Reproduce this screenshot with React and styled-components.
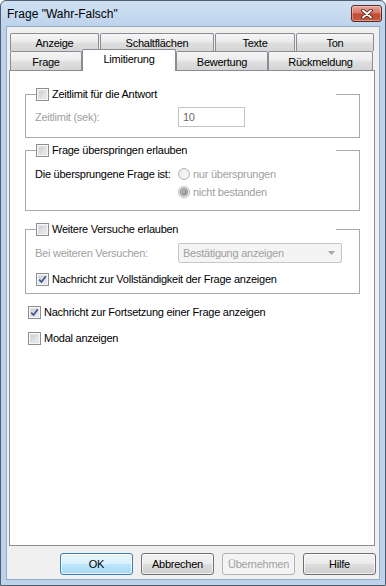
import React from "react";
import styled, { createGlobalStyle } from "styled-components";

const GlobalStyle = createGlobalStyle`
    html, body {
        margin: 0;
        padding: 0;
        background: #ffffff;
    }
    body {
        font-family: "Liberation Sans", Arial, sans-serif;
        font-size: 11px;
        letter-spacing: -0.25px;
        color: #000;
    }
`
const Window = styled.div`
    width: 386px;
    height: 586px;
    box-sizing: border-box;
    border: 1px solid #4f5e70;
    border-radius: 6px 6px 0 0;
    background: linear-gradient(#cfe0f3, #bdd3ec 26px, #bdd3ec);
    display: flex;
    flex-direction: column;
`
const TitleBar = styled.div`
    height: 25px;
    flex-shrink: 0;
    display: flex;
    align-items: center;
    justify-content: space-between;
    padding: 0 3px 0 6px;
`
const Title = styled.div`
    font-size: 12px;
    letter-spacing: 0;
    color: #000;
`
const CloseButton = styled.div`
    width: 31px;
    height: 17px;
    box-sizing: border-box;
    border: 1px solid #5f2a22;
    border-radius: 3px;
    background: linear-gradient(#e8a99c, #d47866 45%, #c24a33 55%, #c95a41);
    box-shadow: inset 0 0 0 1px rgba(255, 255, 255, .35);
    display: flex;
    align-items: center;
    justify-content: center;
`
const Client = styled.div`
    flex: 1;
    margin: 0 5px 5px;
    border: 1px solid #97abc4;
    background: #f0f0f0;
    display: flex;
    flex-direction: column;
    padding: 6px 0 4px;
    min-height: 0;
`
const TabRow = styled.div`
    display: flex;
    align-items: flex-end;
    gap: ${p => p.$gap}px;
    height: ${p => p.$h}px;
    padding-left: 3px;
`
const Tab = styled.div`
    width: ${p => p.$w}px;
    height: ${p => (p.$active ? 22 : p.$h)}px;
    box-sizing: border-box;
    border: 1px solid #898c95;
    border-bottom: none;
    border-radius: 2px 2px 0 0;
    background: ${p => (p.$active ? "#ffffff" : "linear-gradient(#f6f6f6, #ebebeb 45%, #dedede 55%, #d5d5d5)")};
    margin-bottom: ${p => (p.$active ? -1 : 0)}px;
    z-index: ${p => (p.$active ? 2 : 0)};
    display: flex;
    align-items: center;
    justify-content: center;
    padding-top: ${p => (p.$active ? 0 : 1)}px;
    padding-bottom: ${p => (p.$active ? 3 : 0)}px;
`
const Panel = styled.div`
    flex: 1;
    margin: 0 4px 0 2px;
    background: #ffffff;
    border: 1px solid #898c95;
    padding: 16px 14px 0 15px;
    display: flex;
    flex-direction: column;
`
const GroupBox = styled.fieldset`
    margin: ${p => p.$mt}px 0 0;
    padding: ${p => p.$pt}px 9px ${p => p.$pb}px;
    border: 1px solid #a9a9a9;
    min-width: 0;
`
const Legend = styled.legend`
    display: flex;
    align-items: center;
    gap: 3px;
    width: 300px;
    height: 14px;
    padding: 0;
    margin-left: 1px;
    box-sizing: border-box;
`
const FieldGrid = styled.div`
    display: grid;
    grid-template-columns: 143px auto;
    align-items: ${p => p.$align || "center"};
`
const FieldLabel = styled.div`
    color: ${p => (p.$disabled ? "#a0a0a0" : "#000")};
    line-height: 18px;
`
const TextBox = styled.div`
    width: 67px;
    height: 20px;
    box-sizing: border-box;
    border: 1px solid #c3c3c3;
    background: #ffffff;
    color: #6d6d6d;
    padding-left: 4px;
    display: flex;
    align-items: center;
`
const RadioList = styled.div`
    display: flex;
    flex-direction: column;
`
const RadioRow = styled.div`
    height: 18px;
    display: flex;
    align-items: center;
    gap: 3px;
    color: #a0a0a0;
`
const Radio = styled.span`
    width: 12px;
    height: 12px;
    box-sizing: border-box;
    border-radius: 50%;
    border: 1px solid #b8b8b8;
    background: radial-gradient(circle at 60% 60%, #fafafa, #e6e6e6);
    display: flex;
    align-items: center;
    justify-content: center;
    &::after {
        content: "";
        display: ${p => (p.$checked ? "block" : "none")};
        width: 6px;
        height: 6px;
        border-radius: 50%;
        background: radial-gradient(circle at 40% 40%, #b5b5b5, #7f7f7f);
        box-shadow: 0 0 0 1px #9a9a9a;
    }
`
const Select = styled.div`
    width: 164px;
    height: 20px;
    box-sizing: border-box;
    border: 1px solid #c6c6c6;
    border-radius: 2px;
    background: #f4f4f4;
    color: #a0a0a0;
    padding: 0 6px 0 4px;
    display: flex;
    align-items: center;
    justify-content: space-between;
`
const CheckRow = styled.div`
    height: 14px;
    display: flex;
    align-items: center;
    gap: 3px;
    margin: ${p => p.$mt || 0}px 0 0 ${p => p.$ml || 0}px;
`
const Box = styled.span`
    width: 13px;
    height: 13px;
    flex-shrink: 0;
    box-sizing: border-box;
    border: 1px solid #8e8f8f;
    background: linear-gradient(135deg, #c4c8ce, #f4f4f4);
    box-shadow: inset 0 0 0 1px #f7f7f7, inset 0 0 0 2px #e2e3e5;
    display: flex;
    align-items: center;
    justify-content: center;
`
const ButtonRow = styled.div`
    display: flex;
    justify-content: flex-end;
    gap: 8px;
    margin-top: 7px;
    padding-right: 3px;
`
const Button = styled.div`
    width: 73px;
    height: 22px;
    box-sizing: border-box;
    border-radius: 3px;
    display: flex;
    align-items: center;
    justify-content: center;
    border: 1px solid ${p => (p.$variant === "default" ? "#3c7fb1" : p.$variant === "disabled" ? "#b5b2b5" : "#707070")};
    color: ${p => (p.$variant === "disabled" ? "#a0a0a0" : "#000")};
    background: ${p =>
        p.$variant === "default"
            ? "linear-gradient(#eaf6fd, #d9f0fc 50%, #bee6fd 50%, #a7d9f5)"
            : p.$variant === "disabled"
            ? "#f4f4f4"
            : "linear-gradient(#f2f2f2, #ebebeb 50%, #dddddd 50%, #cfcfcf)"};
    box-shadow: inset 0 0 0 1px ${p => (p.$variant === "disabled" ? "#f4f4f4" : "rgba(255, 255, 255, .7)")};
`

function Checkbox({ checked }) {
    return (
        <Box>
            {checked && (
                <svg width="9" height="9" viewBox="0 0 9 9">
                    <path d="M1.2 4.6 L3.5 7 L7.8 1.3" fill="none" stroke="#3f5394" strokeWidth="1.7" />
                </svg>
            )}
        </Box>
    )
}

export default function App() {
    return (
        <>
            <GlobalStyle />
            <Window>
                <TitleBar>
                    <Title>{'Frage "Wahr-Falsch"'}</Title>
                    <CloseButton>
                        <svg width="12" height="10" viewBox="0 0 12 10">
                            <path d="M2 1.5 L10 8.5 M10 1.5 L2 8.5" stroke="#4a1a12" strokeWidth="3.6" strokeLinecap="round" />
                            <path d="M2 1.5 L10 8.5 M10 1.5 L2 8.5" stroke="#ffffff" strokeWidth="2" strokeLinecap="round" />
                        </svg>
                    </CloseButton>
                </TitleBar>
                <Client>
                    <TabRow $h={18} $gap={1}>
                        <Tab $w={89} $h={18}>Anzeige</Tab>
                        <Tab $w={114} $h={18}>Schaltflächen</Tab>
                        <Tab $w={80} $h={18}>Texte</Tab>
                        <Tab $w={78} $h={18}>Ton</Tab>
                    </TabRow>
                    <TabRow $h={19} $gap={0}>
                        <Tab $w={72} $h={19}>Frage</Tab>
                        <Tab $w={94} $active>Limitierung</Tab>
                        <Tab $w={92} $h={19}>Bewertung</Tab>
                        <Tab $w={105} $h={19}>Rückmeldung</Tab>
                    </TabRow>
                    <Panel>
                        <GroupBox $mt={0} $pt={6} $pb={10}>
                            <Legend>
                                <Checkbox />
                                Zeitlimit für die Antwort
                            </Legend>
                            <FieldGrid>
                                <FieldLabel $disabled>Zeitlimit (sek):</FieldLabel>
                                <TextBox>10</TextBox>
                            </FieldGrid>
                        </GroupBox>
                        <GroupBox $mt={5} $pt={8} $pb={9}>
                            <Legend>
                                <Checkbox />
                                Frage überspringen erlauben
                            </Legend>
                            <FieldGrid $align="start">
                                <FieldLabel>Die übersprungene Frage ist:</FieldLabel>
                                <RadioList>
                                    <RadioRow>
                                        <Radio />
                                        nur übersprungen
                                    </RadioRow>
                                    <RadioRow>
                                        <Radio $checked />
                                        nicht bestanden
                                    </RadioRow>
                                </RadioList>
                            </FieldGrid>
                        </GroupBox>
                        <GroupBox $mt={11} $pt={7} $pb={7}>
                            <Legend>
                                <Checkbox />
                                Weitere Versuche erlauben
                            </Legend>
                            <FieldGrid>
                                <FieldLabel $disabled>Bei weiteren Versuchen:</FieldLabel>
                                <Select>
                                    Bestätigung anzeigen
                                    <svg width="7" height="4" viewBox="0 0 7 4">
                                        <path d="M0 0 L7 0 L3.5 4 Z" fill="#a6a6a6" />
                                    </svg>
                                </Select>
                            </FieldGrid>
                            <CheckRow $mt={9} $ml={1}>
                                <Checkbox checked />
                                Nachricht zur Vollständigkeit der Frage anzeigen
                            </CheckRow>
                        </GroupBox>
                        <CheckRow $mt={11} $ml={3}>
                            <Checkbox checked />
                            Nachricht zur Fortsetzung einer Frage anzeigen
                        </CheckRow>
                        <CheckRow $mt={12} $ml={3}>
                            <Checkbox />
                            Modal anzeigen
                        </CheckRow>
                    </Panel>
                    <ButtonRow>
                        <Button $variant="default">OK</Button>
                        <Button>Abbrechen</Button>
                        <Button $variant="disabled">Übernehmen</Button>
                        <Button>Hilfe</Button>
                    </ButtonRow>
                </Client>
            </Window>
        </>
    )
}
